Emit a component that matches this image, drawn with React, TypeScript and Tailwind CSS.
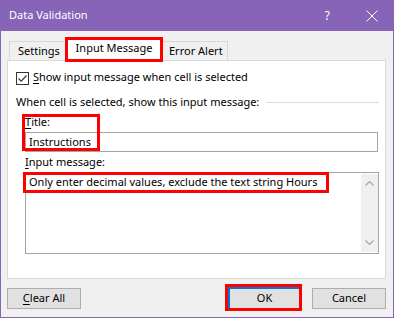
const font = { fontFamily: '"Noto Sans", "Open Sans", sans-serif' };

function CheckBox() {
  return (
    <div className="w-[13px] h-[13px] border border-[#333333] bg-white flex items-center justify-center">
      <svg width="11" height="11" viewBox="0 0 11 11">
        <path d="M1.5 5.5 L4.2 8.2 L9.5 2.5" fill="none" stroke="#333333" strokeWidth="1.2" />
      </svg>
    </div>
  );
}

function Chevron({ down }: { down?: boolean }) {
  return (
    <svg width="9" height="5" viewBox="0 0 9 5">
      <path d={down ? 'M0.5 0.5 L4.5 4.5 L8.5 0.5' : 'M0.5 4.5 L4.5 0.5 L8.5 4.5'} fill="none" stroke="#a6a6a6" strokeWidth="1.2" />
    </svg>
  );
}

export default function App() {
  return (
    <div className="w-[394px] h-[318px] flex flex-col text-[11px] text-black" style={font}>
      {/* title bar */}
      <div className="h-[31px] bg-[#8764b8] flex items-center pl-[9px] text-white text-[11px]">
        <span>Data Validation</span>
        <span className="ml-auto mr-[36px] text-[12px]">?</span>
        <svg className="mr-[16px]" width="12" height="12" viewBox="0 0 12 12">
          <path d="M0.5 0.5 L11.5 11.5 M11.5 0.5 L0.5 11.5" stroke="white" strokeWidth="1" />
        </svg>
      </div>

      {/* body */}
      <div className="flex-1 bg-[#f0f0f0] border-x border-b border-[#8764b8] pl-[6px] pr-[7px] flex flex-col">
        {/* tabs */}
        <div className="flex items-end h-[23px] mt-[7px] -mb-px ml-[2px]">
          <div className="h-[19px] mb-px w-[56px] border-t border-l border-[#d9d9d9] flex items-center pl-[8px]">
            Settings
          </div>
          <div className="relative z-10 h-[23px] w-[98px] bg-white flex items-center justify-center pb-[2px]">
            Input Message
            <div className="absolute left-0 right-0 -top-px -bottom-px border-[3px] border-[#ff0000]" />
          </div>
          <div className="h-[19px] mb-px w-[65px] border-t border-r border-[#d9d9d9] flex items-center pl-[6px]">
            Error Alert
          </div>
        </div>

        {/* panel */}
        <div className="w-[379px] h-[219px] bg-white border border-[#d9d9d9] flex flex-col">
          <div className="flex items-center mt-[11px] pl-[8px] h-[13px]">
            <CheckBox />
            <span className="ml-[4px] -mt-[2px]">
              <u className="underline-offset-2">S</u>how input message when cell is selected
            </span>
          </div>

          <div className="flex items-center mt-[9px] pl-[8px] h-[16px]">
            <span className="leading-[16px]">When cell is selected, show this input message:</span>
            <div className="flex-1 h-px bg-[#dcdcdc] ml-[7px] mr-[6px]" />
          </div>

          <div className="relative ml-[17px] mt-[4px] w-[353px]">
            <div className="h-[16px] leading-[16px]">
              <u className="underline-offset-2">T</u>itle:
            </div>
            <div className="mt-[2px] h-[20px] border border-[#a5a5a5] pl-[3px] leading-[18px]">Instructions</div>
            <div className="absolute -left-[3px] top-0 w-[78px] h-[37px] border-[3px] border-[#ff0000]" />
          </div>

          <div className="ml-[17px] mt-[2px] h-[16px] leading-[16px]">
            <u className="underline-offset-2">I</u>nput message:
          </div>

          <div className="relative ml-[17px] mt-[2px] w-[354px] h-[82px] border border-[#a5a5a5] flex">
            <div className="flex-1 pl-[3px] pt-[1px] leading-[16px]">
              Only enter decimal values, exclude the text string Hours
            </div>
            <div className="w-[17px] my-px bg-[#f0f0f0] flex flex-col items-center justify-between py-[7px]">
              <Chevron />
              <Chevron down />
            </div>
            <div className="absolute -left-[3px] -top-px w-[306px] h-[21px] border-[3px] border-[#ff0000]" />
          </div>
        </div>

        {/* buttons */}
        <div className="flex items-start mt-[9px]">
          <div className="w-[74px] h-[21px] bg-[#e1e1e1] border border-[#adadad] flex items-center justify-center">
            <span>
              <u className="underline-offset-2">C</u>lear All
            </span>
          </div>
          <div className="flex-1" />
          <div className="-mt-[4px] w-[77px] h-[27px] border-[3px] border-[#ff0000]">
            <div className="w-full h-full bg-[#e1e1e1] border-t-2 border-l-2 border-[#0078d7] flex items-center justify-center">
              OK
            </div>
          </div>
          <div className="ml-[10px] w-[74px] h-[21px] bg-[#e1e1e1] border border-[#adadad] flex items-center justify-center">
            Cancel
          </div>
        </div>
      </div>
    </div>
  );
}
